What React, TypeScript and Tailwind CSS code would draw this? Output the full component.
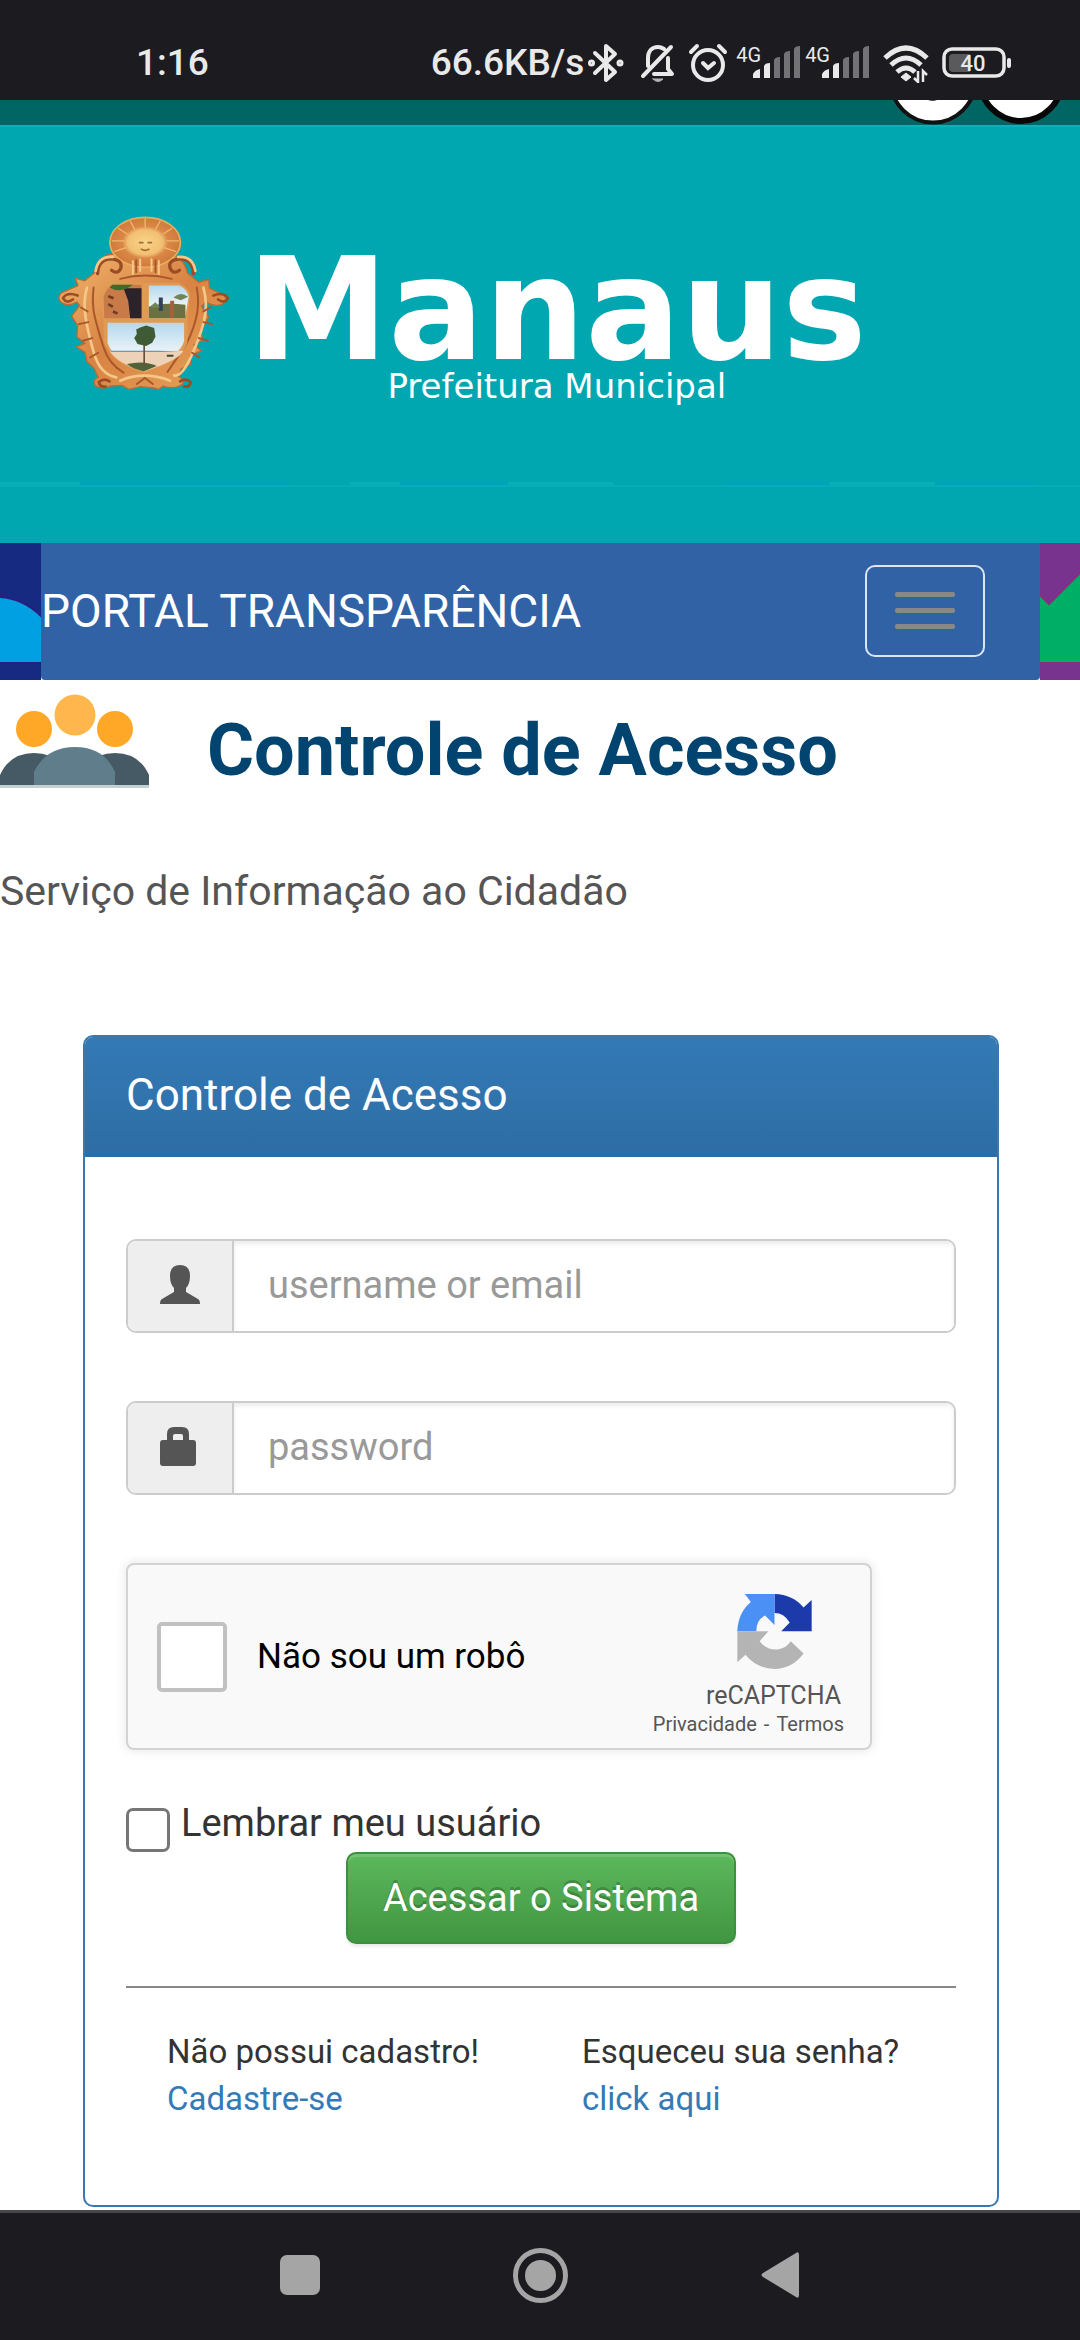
import React from "react";

function StatusBar() {
  return (
    <header className="flex h-[100px] items-start bg-[#1c1b20] pl-[136px] pr-[68px] pt-[40px] font-medium text-[#e9e9e9]">
      <time className="text-[37px] leading-[46px]">1:16</time>
      <div className="ml-auto flex h-[46px] items-center">
        <span className="mr-1 text-[37px] leading-[46px]">66.6KB/s</span>
        <svg className="mr-4 h-10 w-9" viewBox="0 0 36 40" fill="none" stroke="#e9e9e9" strokeWidth="4" strokeLinejoin="round" strokeLinecap="round" aria-label="Bluetooth">
          <path d="m7 10 20 19-9 8V3l9 8L7 30" />
          <circle cx="3.500" cy="20" r="1.500" />
          <circle cx="32" cy="20" r="1.500" />
        </svg>
        <svg className="mr-3 h-10 w-9" viewBox="0 0 36 40" fill="none" stroke="#e9e9e9" strokeWidth="4" strokeLinejoin="round" strokeLinecap="round" aria-label="Silencioso">
          <path d="M31 4 3 33M8 23v-8C8 8 12 4 18 4q3 0 6 2M28 15v11l4 5H14" />
          <path d="M13 36h10q-5 5-10 0Z" fill="#b5b5b5" stroke="#b5b5b5" strokeWidth="1" />
        </svg>
        <svg className="mr-2 h-10 w-10" viewBox="0 0 40 40" fill="none" stroke="#e9e9e9" strokeWidth="4" strokeLinecap="round" aria-label="Alarme">
          <circle cx="20" cy="22" r="15" />
          <path d="m15 20 5 5 6-5M3 9l6-6M37 9l-6-6" />
        </svg>
        <Signal />
        <Signal />
        <svg className="ml-2 mr-3 h-10 w-12" viewBox="0 0 48 40" fill="none" stroke="#e9e9e9" strokeWidth="5" aria-label="Wi-Fi">
          <path d="M3 15q21-20 42 0M9 22q15-14 30 0M15 29q9-8 18 0" />
          <path d="m19 34 5-4 5 4-5 4Z" fill="#e9e9e9" strokeWidth="1" />
          <path d="M36 28v11l-4-4M41 39V28l4 4" strokeWidth="2.500" />
        </svg>
        <svg className="h-8 w-[70px]" viewBox="0 0 70 32" aria-label="Bateria 40%">
          <rect x="2" y="2" width="60" height="27" rx="8" fill="none" stroke="#e9e9e9" strokeWidth="3.500" />
          <path d="M11 7h17v18H11q-4 0-4-4V11q0-4 4-4Z" fill="#5a5a5c" />
          <rect x="65" y="11" width="4" height="10" rx="2" fill="#e9e9e9" />
          <text x="31" y="24" fontSize="22" fontWeight="500" textAnchor="middle" fill="#e9e9e9">40</text>
        </svg>
      </div>
    </header>
  );
}

function Signal() {
  return (
    <div className="mr-1 flex h-10 items-start">
      <span className="text-[20px] font-normal leading-[24px]">4G</span>
      <svg className="-ml-[9px] h-10 w-[49px]" viewBox="14 0 49 40" aria-label="Sinal de rede">
        <path d="M15 35v-4q2-4 7-5v9ZM26 35V23q1-3 6-3v15Z" fill="#e9e9e9" />
        <path d="M36 35V17q1-3 6-3v21ZM46 35V11q1-3 6-3v27ZM56 35V6q1-3 6-3v32Z" fill="#737375" />
      </svg>
    </div>
  );
}

function Crest() {
  return (
    <svg className="h-[178px] w-[178px] shrink-0" viewBox="50 75 535 535" aria-label="Brasão de Manaus">
      <defs>
        <linearGradient id="gold" x1="0" y1="0" x2="1" y2="1">
          <stop offset="0" stopColor="#efb56c" />
          <stop offset="0.500" stopColor="#d98343" />
          <stop offset="1" stopColor="#e7a35a" />
        </linearGradient>
        <radialGradient id="sun">
          <stop offset="0" stopColor="#f8d58a" />
          <stop offset="0.500" stopColor="#f2bf72" />
          <stop offset="0.650" stopColor="#d98746" />
          <stop offset="1" stopColor="#cf7a3c" />
        </radialGradient>
        <linearGradient id="sky" x1="0" y1="0" x2="0" y2="1">
          <stop offset="0" stopColor="#b4d8ee" />
          <stop offset="0.600" stopColor="#eaf3f8" />
        </linearGradient>
      </defs>
      <path
        d="M215 190q-45 5-52 55l-30 25-28-8 8 22-50 22q-16 18 2 30 20 12 45-2l8 10-24 32 18 28-2 34 24 20-26 10 26 16 6 28 22 22 12 26q-18 6-10 24 20 16 46 2l36-2 20 12 34-8 40 4 16 4 14-10q28 10 48 0 26-12-4-30l10-22 28-14-2-26 34-14-22-18 26-14-6-28 24-42-22-32 14-12q28 16 48 6 22-10 6-26l-44-22-2-26-30 8-34-28q-10-50-60-56Z"
        fill="url(#gold)" stroke="#b96c35" strokeWidth="4"
      />
      <ellipse cx="315" cy="154" rx="106" ry="75" fill="url(#sun)" stroke="#e9ac60" strokeWidth="5" />
      <g stroke="#f0b86e" strokeWidth="4">
        <path d="M315 82v28M270 90l14 26M234 112l28 18M215 150h38M222 182l36-12M360 90l-14 26M396 112l-28 18M417 150h-38M408 182l-36-12" />
      </g>
      <path d="M296 155h14M322 155h14M302 174q13 9 26 0" stroke="#a96a30" strokeWidth="5" fill="none" />
      <g fill="none" stroke="#9c4c24" strokeWidth="10" strokeLinecap="round">
        <path d="M172 248q2-44 42-44 34 4 28 28-10 20-28 6M460 248q-2-44-42-44-36 4-28 28 10 20 28 6" />
        <path d="M112 314q-32-12-44 8 10 18 30 4M520 314q32-12 44 8-10 18-30 4" strokeWidth="8" />
        <path d="M208 572q-16-12-32 2 2 16 20 14M420 572q16-12 32 2-2 16-20 14" strokeWidth="8" />
      </g>
      <g fill="none" stroke="#f5c788" strokeWidth="8" strokeLinecap="round">
        <path d="M166 240q8-46 52-42M466 240q-8-46-52-42M140 290q-12 40-4 90t26 110 66 70M490 290q14 50 2 100t-40 110-50 54" />
        <path d="M278 210v40M300 205v35M334 205v35M356 210v40" strokeWidth="6" />
        <path d="M240 570q70-30 150 0" />
      </g>
      <g fill="none" stroke="#a9572b" strokeWidth="6" strokeLinecap="round">
        <path d="M160 290q-6 50 4 90t26 90 60 76M470 290q10 50-4 100t-34 80-50 74M288 208v36M346 208v36M240 264q75-20 155 0" />
        <path d="m122 350 20 12M116 400l28-6M128 450l28-8M150 500l24-14M512 350l-22 12M516 400l-26-6M504 450l-28-8M478 500l-22-14M290 580l24-18 24 18" />
      </g>
      <path d="M180 310q16-24 44-34h190q24 8 36 32l-8 78v68q-12 52-130 94-98-30-122-96v-66Z" fill="#e19a52" />
      <path d="M190 318q10-30 32-36h82v100H192Z" fill="#c87b48" />
      <path d="M250 292h54v90h-34l-6-52Z" fill="#2c2229" />
      <path d="M208 290q34 20 70-8h-62Z" fill="#3f6b29" />
      <path d="m204 316 16 6M204 340l14 8M218 362l14 6" stroke="#713d22" strokeWidth="8" />
      <path d="M326 284h92q24 12 28 34l-12 64H326Z" fill="url(#sky)" />
      <path d="M326 348q40-14 110-6v40H326Z" fill="#6d7141" />
      <path d="M356 320h12v40h-12Z" fill="#31405b" />
      <path d="M390 330h12v50h-12Z" fill="#a7603c" />
      <path d="m326 350 20-16 14 16ZM400 320q20-20 44-2l-22 10Z" fill="#718455" />
      <path d="M202 396h230v54q-8 44-122 92-90-30-108-86Z" fill="url(#sky)" />
      <path d="M208 480h222q-12 28-118 62-82-24-104-62Z" fill="#eed2b8" />
      <path d="M208 480h150l60 4H214Z" fill="#6f98ae" />
      <path d="M260 520q54-12 90 6l-40 16q-34-8-50-22Z" fill="#52633a" />
      <path d="M380 492h20v6h-20Z" fill="#3d4a2c" />
      <path d="M312 525v-75" stroke="#66503b" strokeWidth="5" />
      <path d="m300 410 18-6 24 8 4 26-10 18-18 10-26-6-10-18 8-12-2-14Z" fill="#3e5b35" />
    </svg>
  );
}

function Masthead() {
  return (
    <>
      <div className="flex h-[25px] justify-end gap-px overflow-hidden bg-[#006663] pr-[14px]">
        <svg className="h-[25px] w-[88px]" viewBox="0 0 88 25" aria-hidden="true">
          <circle cx="44" cy="-20" r="42.500" fill="#fff" stroke="#111" strokeWidth="4" />
          <path d="M39 0h9q-4 2-9 0Z" fill="#444" />
        </svg>
        <svg className="h-[25px] w-[88px]" viewBox="0 0 88 25" aria-hidden="true">
          <circle cx="43" cy="-20" r="41" fill="#fff" stroke="#080808" strokeWidth="6" />
        </svg>
      </div>
      <div className="border-t-2 border-[#08b2bb] bg-[#00a7b1]">
        <div className="flex h-[354px] items-start pl-[57px] pt-[89px]">
          <Crest />
          <div className="ml-3 mt-9 flex flex-col items-center font-['DejaVu_Sans'] text-white">
            <span className="text-[142px] font-bold leading-[116px]">Manaus</span>
            <span className="text-[34px] leading-[36px]">Prefeitura Municipal</span>
          </div>
        </div>
        <svg className="h-[6px] w-full" viewBox="0 0 1080 6" preserveAspectRatio="none" aria-hidden="true">
          <path d="M0 1h80v3H0ZM350 1h50v3h-50ZM508 1h105v3H508ZM830 1h105v3H830Z" fill="#0aafb5" />
          <path d="M80 1h210v3H80ZM400 1h108v3H400ZM725 1h105v3H725ZM935 1h100v3H935Z" fill="#00a3bb" />
          <path d="M0 4h1080v2H0Z" fill="#06adb6" />
        </svg>
        <div className="h-[56px]" />
      </div>
    </>
  );
}

function Navbar() {
  return (
    <nav className="flex h-[137px]">
      <svg className="h-[137px] w-[41px] shrink-0" viewBox="0 0 41 137" aria-hidden="true">
        <path d="M0 0h41v137H0Z" fill="#172a82" />
        <path d="M-3 54q26 0 47 22v44H-3Z" fill="#00a0e3" stroke="#2c1c7c" strokeWidth="2" />
      </svg>
      <div className="flex grow items-center justify-between rounded-b-[4px] bg-[#3162a6] pb-[2px] pr-[55px]">
        <a href="#portal" className="text-[46px] leading-[60px] text-white">
          PORTAL TRANSPARÊNCIA
        </a>
        <button type="button" aria-label="Abrir menu" className="flex h-[92px] w-[120px] flex-col items-center justify-center gap-[11px] rounded-[10px] border-2 border-[#dce6f2]">
          <span className="h-[5px] w-[60px] rounded-[2px] bg-[#888]" />
          <span className="h-[5px] w-[60px] rounded-[2px] bg-[#888]" />
          <span className="h-[5px] w-[60px] rounded-[2px] bg-[#888]" />
        </button>
      </div>
      <svg className="h-[137px] w-[40px] shrink-0" viewBox="0 0 40 137" aria-hidden="true">
        <path d="M0 0h40v137H0Z" fill="#77338d" />
        <path d="M-3 49 9 61l35-35v94H-3Z" fill="#00ae66" stroke="#8a2d7d" strokeWidth="2" />
      </svg>
    </nav>
  );
}

function PeopleIcon() {
  return (
    <svg className="h-[94px] w-[149px] shrink-0" viewBox="0 0 149 94" aria-hidden="true">
      <circle cx="34" cy="35" r="18" fill="#ffa726" />
      <circle cx="115" cy="35" r="18" fill="#ffa726" />
      <circle cx="75" cy="21" r="20.500" fill="#ffb74d" />
      <path d="M0 94V81q10-22 34-22t36 22v13ZM79 94V81q12-22 36-22t34 22v13Z" fill="#455a64" />
      <path d="M34 94V78q12-25 41-25t40 25v16Z" fill="#607d8b" />
      <path d="M0 91h149v3H0Z" fill="#c5d0d5" />
    </svg>
  );
}

function Field({ label, type, children }: { label: string; type: string; children: React.ReactNode }) {
  return (
    <label className="flex h-[94px] overflow-hidden rounded-[10px] border-2 border-[#ccc]">
      <span className="flex w-[106px] shrink-0 items-center border-r-2 border-[#ccc] bg-[#eee] pb-[3px] pl-[32px]">
        {children}
      </span>
      <input
        type={type}
        placeholder={label}
        aria-label={label}
        className="min-w-0 grow bg-white px-[34px] pb-[2px] text-[38px] text-[#555] shadow-[inset_0_3px_4px_rgba(0,0,0,0.08)] outline-none placeholder:text-[#999]"
      />
    </label>
  );
}

function Recaptcha() {
  return (
    <div className="flex h-[187px] w-[746px] max-w-full items-center rounded-[8px] border-2 border-[#d3d3d3] bg-[#f9f9f9] pl-[29px] shadow-[0_0_10px_2px_rgba(0,0,0,0.08)]">
      <input id="robot" type="checkbox" className="size-[70px] shrink-0 appearance-none rounded-[5px] border-4 border-[#c1c1c1] bg-white" />
      <label htmlFor="robot" className="ml-[30px] text-[35px] leading-[46px] text-black">
        Não sou um robô
      </label>
      <div className="ml-auto flex flex-col items-end pr-[26px] pt-[16px] text-[#555]">
        <svg className="mr-[32px] size-[75px]" viewBox="0 0 220 222" aria-hidden="true">
          <path d="M110 0q55 2 86 40l24-22v92h-90l25-26q-17-28-45-28Z" fill="#1c3aa9" />
          <path d="M22 0h88v92L82 64Q56 76 56 110H0q2-54 40-86Z" fill="#4a90f5" />
          <path d="M0 110h92l-26 30q20 26 54 24 26-4 38-24l38 36q-32 44-86 46-54-2-86-42L0 202Z" fill="#b4b4b4" />
        </svg>
        <span className="mr-[3px] mt-[11px] text-[25px] leading-[32px]">reCAPTCHA</span>
        <span className="flex gap-[7px] text-[20px] leading-[24px]">
          <a href="#privacidade">Privacidade</a>
          <span>-</span>
          <a href="#termos">Termos</a>
        </span>
      </div>
    </div>
  );
}

function LoginPanel() {
  return (
    <section className="ml-[83px] mr-[81px] overflow-hidden rounded-[10px] border-2 border-[#3b78b0] bg-white">
      <h2 className="flex h-[120px] items-center bg-linear-to-b from-[#337ab7] to-[#2e6da4] px-[41px] pb-[4px] text-[44px] leading-[50px] text-white">
        Controle de Acesso
      </h2>
      <form className="px-[41px] pt-[82px]" onSubmit={(e) => e.preventDefault()}>
        <div className="flex flex-col gap-[68px]">
          <Field label="username or email" type="text">
            <svg className="h-[39px] w-[40px]" viewBox="0 0 40 39" fill="#555" aria-hidden="true">
              <path d="M20 0q10 0 10 11 0 8-4 12v4l12 7q2 1 2 5H0q0-4 2-5l12-7v-4q-4-4-4-12Q10 0 20 0Z" />
            </svg>
          </Field>
          <Field label="password" type="password">
            <svg className="h-[39px] w-[36px]" viewBox="0 0 36 39" fill="#555" aria-hidden="true">
              <path fillRule="evenodd" d="M7 13V7q0-7 7-7h8q7 0 7 7v6h4q3 0 3 3v20q0 3-3 3H3q-3 0-3-3V16q0-3 3-3Zm6 0h10V9q0-2-2-2h-6q-2 0-2 2Z" />
            </svg>
          </Field>
          <Recaptcha />
        </div>
        <label className="mt-[51px] flex h-[51px] items-start text-[38px] leading-[44px] text-[#333]">
          <input type="checkbox" className="mr-[11px] mt-[7px] size-[44px] appearance-none rounded-[7px] border-[3px] border-[#767676] bg-white" />
          Lembrar meu usuário
        </label>
        <button
          type="submit"
          className="mx-auto block h-[92px] rounded-[10px] border-2 border-[#3e8f3e] bg-linear-to-b from-[#5cb85c] to-[#419641] px-[35px] text-[38px] text-white shadow-[inset_0_3px_0_rgba(255,255,255,0.15),0_3px_3px_rgba(0,0,0,0.08)] text-shadow-[0_-3px_0_rgba(0,0,0,0.2)]"
        >
          Acessar o Sistema
        </button>
        <hr className="mt-[42px] border-t-2 border-[#888]" />
        <div className="grid grid-cols-2 pb-[83px] pt-[40px] text-[33px] leading-[47px] text-[#333]">
          <p className="pl-[41px]">
            Não possui cadastro!
            <br />
            <a href="#cadastro" className="text-[#337ab7]">Cadastre-se</a>
          </p>
          <p className="pl-[41px]">
            Esqueceu sua senha?
            <br />
            <a href="#senha" className="text-[#337ab7]">click aqui</a>
          </p>
        </div>
      </form>
    </section>
  );
}

function SystemNav() {
  return (
    <footer className="mt-[3px] flex h-[130px] items-center justify-center gap-[180px] border-t-[3px] border-[#47464b] bg-[#1c1b20] pb-[3px]">
      <button type="button" aria-label="Recentes" className="flex size-[60px] items-center justify-center">
        <span className="size-[40px] rounded-[7px] bg-[#a5a5a5]" />
      </button>
      <button type="button" aria-label="Início" className="flex size-[60px] items-center justify-center">
        <span className="flex size-[55px] items-center justify-center rounded-full border-[5px] border-[#a5a5a5]">
          <span className="size-[31px] rounded-full bg-[#a5a5a5]" />
        </span>
      </button>
      <button type="button" aria-label="Voltar" className="flex size-[60px] items-center justify-center">
        <svg className="h-[46px] w-[38px]" viewBox="0 0 38 46" fill="#a5a5a5" aria-hidden="true">
          <path d="M35 1q3-2 3 2v40q0 4-3 2L2 25q-3-2 0-4Z" />
        </svg>
      </button>
    </footer>
  );
}

export default function App() {
  return (
    <div className="bg-white font-['Roboto',sans-serif]">
      <StatusBar />
      <Masthead />
      <Navbar />
      <main>
        <div className="flex items-start gap-[58px] pt-[14px]">
          <PeopleIcon />
          <h1 className="text-[72px] font-bold leading-[114px] text-[#00446f]">Controle de Acesso</h1>
        </div>
        <p className="mb-[111px] mt-[50px] text-[41px] leading-[66px] text-[#555]">Serviço de Informação ao Cidadão</p>
        <LoginPanel />
      </main>
      <SystemNav />
    </div>
  );
}
